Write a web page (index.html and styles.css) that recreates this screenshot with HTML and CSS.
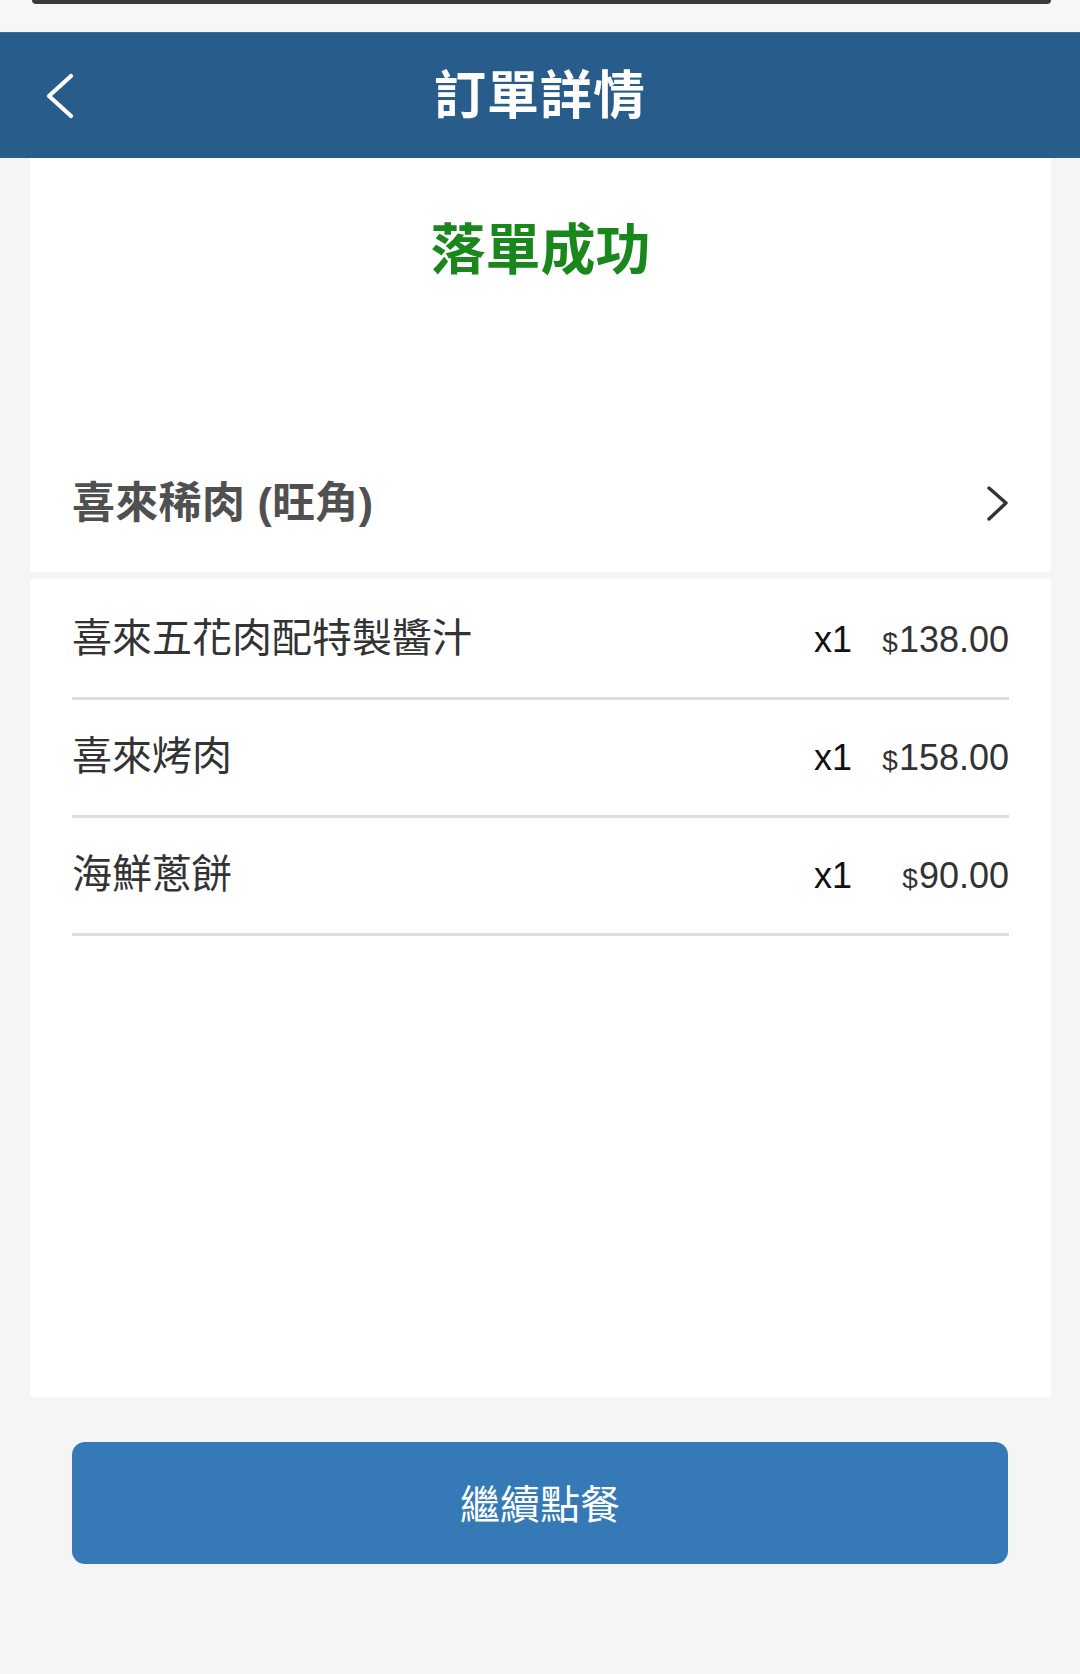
FILE: index.html
```html
<!DOCTYPE html>
<html lang="zh-Hant">
<head>
<meta charset="utf-8">
<title>訂單詳情</title>
<link rel="stylesheet" href="styles.css">
</head>
<body>
<div class="page">
  <div class="status">
    <div class="status-bar"></div>
  </div>
  <header class="topbar">
    <div class="back">
      <svg width="30" height="46" viewBox="0 0 30 46"><polyline points="25,3 3,23 25,43" fill="none" stroke="#fff" stroke-width="4.2" stroke-linecap="round" stroke-linejoin="round"/></svg>
    </div>
    <h1 class="title">訂單詳情</h1>
    <div class="spacer"></div>
  </header>

  <section class="card card-status">
    <div class="success">落單成功</div>
    <div class="store">
      <span class="store-name">喜來稀肉 (旺角)</span>
      <svg class="chev" width="24" height="36" viewBox="0 0 24 36"><polyline points="4,3 21,18 4,34" fill="none" stroke="#333" stroke-width="3.4" stroke-linecap="round" stroke-linejoin="round"/></svg>
    </div>
  </section>

  <section class="card card-items">
    <div class="row">
      <span class="name">喜來五花肉配特製醬汁</span>
      <span class="qty">x1</span>
      <span class="price"><span class="cur">$</span>138.00</span>
    </div>
    <div class="row">
      <span class="name">喜來烤肉</span>
      <span class="qty">x1</span>
      <span class="price"><span class="cur">$</span>158.00</span>
    </div>
    <div class="row">
      <span class="name">海鮮蔥餅</span>
      <span class="qty">x1</span>
      <span class="price"><span class="cur">$</span>90.00</span>
    </div>
  </section>

  <div class="actions">
    <button class="btn">繼續點餐</button>
  </div>
</div>
</body>
</html>
```

FILE: styles.css
```css
* { box-sizing: border-box; }
html, body {
  margin: 0;
  padding: 0;
  background: #f5f5f6;
}
body {
  font-family: "Liberation Sans", "Noto Sans CJK TC", sans-serif;
  width: 1080px;
  height: 1674px;
  overflow: hidden;
}
.page {
  display: flex;
  flex-direction: column;
  height: 1674px;
}
.status {
  height: 32px;
  padding: 0 29px 0 32px;
  background: #f7f7f8;
}
.status-bar {
  height: 4px;
  background: #3a3a3a;
  border-radius: 0 0 14px 14px;
}
.topbar {
  height: 126px;
  background: #285c8b;
  display: grid;
  grid-template-columns: 1fr auto 1fr;
  align-items: center;
  border-top: 1px solid #3d6e98;
}
.back {
  padding-left: 46px;
  display: flex;
  align-items: center;
  padding-top: 1px;
}
.title {
  margin: 0 0 8px;
  color: #fff;
  font-family: "Noto Sans CJK TC", sans-serif;
  font-weight: 700;
  font-size: 52px;
  line-height: 1;
  letter-spacing: 1px;
}
.card {
  background: #fff;
  margin: 0 29px 0 30px;
}
.card-status {
  height: 414px;
  display: flex;
  flex-direction: column;
}
.success {
  margin-top: 54px;
  text-align: center;
  color: #1a871c;
  font-family: "Noto Sans CJK TC", sans-serif;
  font-weight: 700;
  font-size: 55px;
  line-height: 67px;
}
.store {
  margin-top: auto;
  height: 138px;
  display: flex;
  align-items: center;
  justify-content: space-between;
  padding: 0 42px 8px 42px;
}
.store-name {
  font-size: 43px;
  font-weight: 700;
  color: #505050;
  letter-spacing: 0.3px;
}
.chev {
  margin-top: 8px;
}
.card-items {
  margin-top: 7px;
  height: 818px;
  padding: 3px 42px 0 42px;
}
.row {
  height: 118px;
  display: flex;
  align-items: center;
  border-bottom: 3px solid #dedede;
}
.name {
  flex: 1;
  font-family: "Noto Sans CJK TC", sans-serif;
  font-size: 40px;
  color: #333;
  line-height: 1;
  padding-bottom: 10px;
}
.qty {
  font-size: 36px;
  color: #111;
  margin-left: 2px;
}
.price {
  width: 157px;
  text-align: right;
  font-size: 36px;
  color: #333;
}
.cur {
  font-size: 28px;
  margin-right: 1px;
}
.actions {
  padding: 45px 72px 0;
}
.btn {
  width: 100%;
  height: 122px;
  border: none;
  border-radius: 13px;
  background: #3579b6;
  color: #fff;
  font-family: "Noto Sans CJK TC", sans-serif;
  font-size: 40px;
  padding: 0;
  padding-bottom: 2px;
}
```
